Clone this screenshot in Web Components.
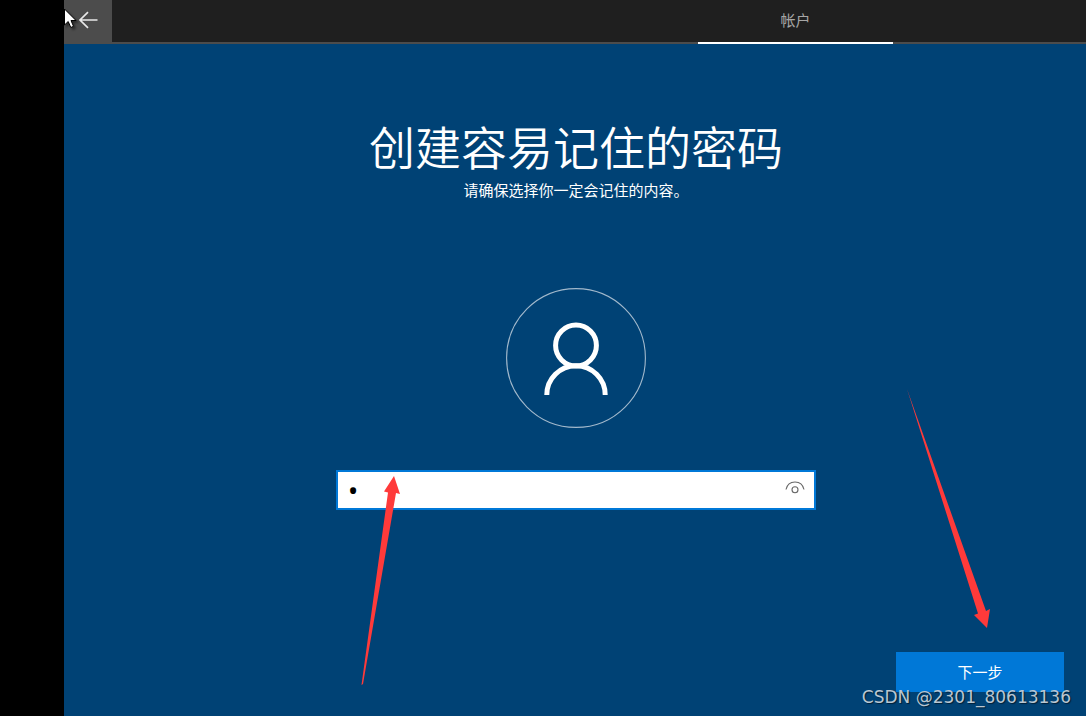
<!DOCTYPE html>
<html lang="zh-CN">
<head>
<meta charset="utf-8">
<meta name="viewport" content="width=device-width, initial-scale=1">
<title>创建容易记住的密码</title>
<style>
  html, body { margin: 0; background: #000; }
  body { font-family: "Noto Sans CJK SC", sans-serif; font-size: 15px; color: #fff; overflow: hidden; }
</style>
</head>
<body>
<setup-screen></setup-screen>
<script>
class BaseElement extends HTMLElement {
  connectedCallback() {
    if (this.shadowRoot) return;
    this.attachShadow({ mode: "open" }).innerHTML = this.constructor.markup;
  }
}

class SetupHeader extends BaseElement {
  static markup = `
    <style>
      :host { display: flex; justify-content: space-between; height: 42px; background: #1f1f1f; border-bottom: 2px solid #4c4c4c; }
      button { width: 48px; border: 0; padding: 0 0 2px; background: #4c4c4c; display: grid; place-items: center; }
      nav { display: flex; margin-right: 193px; }
      a { width: 195px; height: 42px; line-height: 40px; text-align: center; color: #a6a6a6; text-decoration: none; border-bottom: 2px solid #fff; }
    </style>
    <button type="button" aria-label="返回">
      <svg width="20" height="18" viewBox="0 0 20 18" fill="none" stroke="#e8e8e8" stroke-width="1.7"><path d="M19.500 9H2M10 1.2L2 9l8 7.8"/></svg>
    </button>
    <nav><a href="#account"><slot></slot></a></nav>`;
}
customElements.define("setup-header", SetupHeader);

class UserAvatar extends BaseElement {
  static markup = `
    <style>:host { display: block; } svg { display: block; }</style>
    <svg width="140" height="140" viewBox="0 0 140 140" fill="none" stroke="#fff">
      <circle cx="70" cy="70" r="69.4" stroke="#a2b9cc" stroke-width="1.1"/>
      <circle cx="70" cy="57.5" r="20.4" stroke-width="5"/>
      <path d="M40.8 107A29.2 29.2 0 0 1 99.2 107" stroke-width="5"/>
    </svg>`;
}
customElements.define("user-avatar", UserAvatar);

class PasswordField extends BaseElement {
  static markup = `
    <style>
      :host { display: block; position: relative; width: min(480px, 100%); }
      .box { display: flex; height: 36px; border: 2px solid #0078d7; background: #fff; }
      input { flex: 1; min-width: 0; border: 0; outline: 0; padding: 0 10px; background: none; color: #000; font: 27px "Noto Sans", sans-serif; }
      button { width: 38px; border: 0; padding: 0 0 4px; background: none; display: grid; place-items: center; }
      .pointer { position: absolute; left: 24px; top: 4px; pointer-events: none; }
    </style>
    <div class="box">
      <input type="password" value="1" aria-label="密码">
      <button type="button" aria-label="显示密码">
        <svg width="20" height="14" viewBox="0 0 20 14" fill="none" stroke="#666" stroke-width="1.1"><path d="M1 8.500C2 4 5.5 1 10 1S18 4 19 8.500"/><circle cx="10" cy="8.700" r="3"/></svg>
      </button>
    </div>
    <svg class="pointer" width="42" height="212" viewBox="360 474 42 212" fill="#ff3a3a" aria-hidden="true"><path d="M394 476L400 494 396 493 363 684 361.500 685 388 492.500 384 491.500Z"/></svg>`;
}
customElements.define("password-field", PasswordField);

class NextButton extends BaseElement {
  static markup = `
    <style>
      :host { display: block; position: relative; }
      button { width: 168px; height: 40px; border: 0; padding: 0 0 2px; background: #0078d7; color: #fff; font: inherit; }
      .pointer { position: absolute; right: 72px; bottom: 62px; pointer-events: none; }
    </style>
    <button type="button"><slot></slot></button>
    <svg class="pointer" width="88" height="242" viewBox="904 388 88 242" fill="#ff3a3a" aria-hidden="true"><path d="M907 389L986 611 990 609 987 628 974 615 978 613.500Z"/></svg>`;
}
customElements.define("next-button", NextButton);

class SetupScreen extends BaseElement {
  static markup = `
    <style>
      :host { display: flex; flex-direction: column; position: relative; min-height: 100vh; margin-left: 64px; background: #004275; }
      main { flex: 1; display: flex; flex-direction: column; align-items: center; padding: 68px 0 0 2px; }
      h1 { margin: 0 0 2px; font-size: 46px; font-weight: 350; line-height: 66px; }
      p { margin: 0; line-height: 20px; }
      user-avatar { margin: 88px 0 42px; }
      footer { display: flex; justify-content: flex-end; padding: 0 22px 24px 0; }
      .mark { position: absolute; right: 15px; bottom: 5px; font: 17px/28px "DejaVu Sans", sans-serif; color: #b9c6d1; text-shadow: 1px 1px 1px #0008; white-space: nowrap; pointer-events: none; }
      .cursor { position: absolute; left: 0; top: 8px; filter: drop-shadow(2px 2px 1px #0007); }
    </style>
    <setup-header>帐户</setup-header>
    <main>
      <h1>创建容易记住的密码</h1>
      <p>请确保选择你一定会记住的内容。</p>
      <user-avatar></user-avatar>
      <password-field></password-field>
    </main>
    <footer><next-button>下一步</next-button></footer>
    <span class="mark">CSDN @2301_80613136</span>
    <svg class="cursor" width="13" height="21" viewBox="0 0 13 21" aria-hidden="true"><path d="M.5 1V17L4.200 13.500 6.800 19.500 9.500 18.300 7 12.500H12Z" fill="#fff" stroke="#000"/></svg>`;
}
customElements.define("setup-screen", SetupScreen);
</script>
</body>
</html>
